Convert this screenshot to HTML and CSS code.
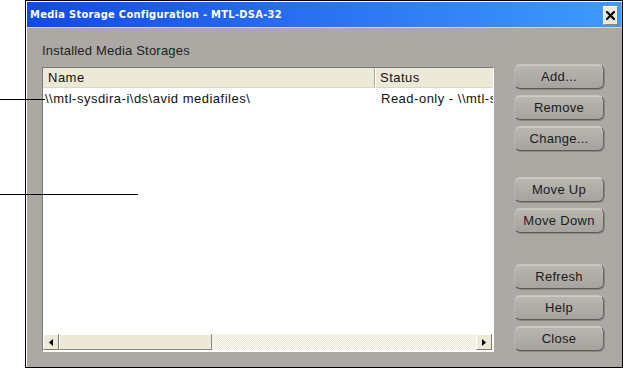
FILE: index.html
```html
<!DOCTYPE html>
<html lang="en">
<head>
    <meta charset="UTF-8">
    <title>Media Storage Configuration</title>
    <link rel="stylesheet" href="styles.css">
</head>
<body>

<div class="window">
    <div class="titlebar">
        <span class="title">Media Storage Configuration - MTL-DSA-32</span>
        <button class="close" type="button" aria-label="Close">
            <svg width="9" height="9" viewBox="0 0 9 9">
                <path d="M1 1 L8 8 M8 1 L1 8" stroke="#000" stroke-width="2.2" stroke-linecap="square"/>
            </svg>
        </button>
    </div>

    <div class="content">
        <div class="left">
            <div class="caption">Installed Media Storages</div>
            <div class="listbox">
                <div class="header">
                    <div class="col name">Name</div>
                    <div class="col status">Status</div>
                </div>
                <div class="rows">
                    <div class="row">
                        <div class="cell name">\\mtl-sysdira-i\ds\avid mediafiles\</div>
                        <div class="cell status">Read-only - \\mtl-sysdira-i\ds</div>
                    </div>
                </div>
                <div class="hscroll">
                    <div class="arrow">
                        <svg width="4" height="7" viewBox="0 0 4 7"><path d="M4 0 L0 3.5 L4 7 Z" fill="#000"/></svg>
                    </div>
                    <div class="thumb"></div>
                    <div class="track"></div>
                    <div class="arrow">
                        <svg width="4" height="7" viewBox="0 0 4 7"><path d="M0 0 L4 3.5 L0 7 Z" fill="#000"/></svg>
                    </div>
                </div>
            </div>
        </div>

        <div class="buttons">
            <div class="group">
                <button class="btn" type="button">Add...</button>
                <button class="btn" type="button">Remove</button>
                <button class="btn" type="button">Change...</button>
            </div>
            <div class="group move">
                <button class="btn" type="button">Move Up</button>
                <button class="btn" type="button">Move Down</button>
            </div>
            <div class="group tail">
                <button class="btn" type="button">Refresh</button>
                <button class="btn" type="button">Help</button>
                <button class="btn" type="button">Close</button>
            </div>
        </div>
    </div>
</div>

<!-- callout leader lines -->
<div class="leader first"></div>
<div class="leader second"></div>

</body>
</html>
```

FILE: styles.css
```css
body {
    margin: 0;
    width: 623px;
    height: 368px;
    background-color: #fff;
    font-family: 'Liberation Sans', Arial, sans-serif;
    position: relative;
    overflow: hidden;
}

.window {
    margin-left: 25px;
    width: 595px;
    height: 365px;
    border: 1px solid #000;
    background-color: #aca9a5;
    box-shadow: inset 1px 1px 0 #fff;
    padding: 1px 0 0 1px;
    box-sizing: content-box;
    display: flex;
    flex-direction: column;
}

.titlebar {
    height: 25px;
    margin-right: 1px;
    background: linear-gradient(to right, #1249e6, #2a72f2 50%, #3e9bff);
    border-bottom: 1px solid #d8d6d2;
    display: flex;
    align-items: center;
    justify-content: space-between;
    padding: 0 3px 0 3px;
}

.title {
    color: #fff;
    font-family: 'DejaVu Sans Condensed', 'DejaVu Sans', Verdana, sans-serif;
    font-weight: bold;
    font-size: 11px;
    letter-spacing: 0.3px;
}

.close {
    width: 15px;
    height: 19px;
    padding: 0;
    border: 1px solid #fff;
    border-color: #fff #8a887f #8a887f #fff;
    background-color: #ece9d8;
    display: flex;
    align-items: center;
    justify-content: center;
    margin-top: 1px;
}

.content {
    display: flex;
    gap: 20px;
    padding: 15px 0 0 15px;
}

.left {
    display: flex;
    flex-direction: column;
}

.caption {
    font-size: 13px;
    line-height: 15px;
    letter-spacing: 0.2px;
    color: #222;
    margin-bottom: 9px;
}

.listbox {
    width: 450px;
    height: 283px;
    border: 1px solid;
    border-color: #7d7a75 #fff #fff #7d7a75;
    background-color: #fff;
    display: flex;
    flex-direction: column;
    overflow: hidden;
}

.header {
    display: flex;
    height: 19px;
    background-color: #ece9d8;
    border-bottom: 1px solid #dcd8c6;
    flex-shrink: 0;
}

.col, .cell {
    font-size: 13px;
    color: #111;
    white-space: nowrap;
    overflow: hidden;
    flex-shrink: 0;
}

.col {
    line-height: 19px;
    padding-left: 5px;
    letter-spacing: 0.5px;
}

.col.name {
    width: 326px;
    border-right: 1px solid #aca899;
    box-shadow: 1px 0 0 #fff;
}

.col.status {
    width: 140px;
    padding-left: 5px;
}

.rows {
    flex: 1;
}

.row {
    display: flex;
    height: 17px;
    line-height: 17px;
    margin-top: 2px;
    letter-spacing: 0.5px;
}

.cell.name {
    width: 335px;
    padding-left: 2px;
}

.cell.status {
    width: 112px;
    padding-left: 1px;
}

.hscroll {
    display: flex;
    height: 16px;
    margin: 0 1px 1px 0;
    flex-shrink: 0;
}

.arrow {
    width: 14px;
    height: 14px;
    border: 1px solid;
    border-color: #fff #7a786f #7a786f #fff;
    background-color: #ece9d8;
    display: flex;
    align-items: center;
    justify-content: center;
}

.thumb {
    width: 151px;
    height: 14px;
    border: 1px solid;
    border-color: #fff #8a887f #8a887f #fff;
    background-color: #ece9d8;
}

.track {
    flex: 1;
    background-color: #f3f1e8;
    background-image: repeating-conic-gradient(#e9e6d8 0 25%, #fbfaf5 0 50%);
    background-size: 2px 2px;
}

.buttons {
    display: flex;
    flex-direction: column;
    padding-top: 21px;
}

.group {
    display: flex;
    flex-direction: column;
    gap: 7px;
}

.group.move {
    margin-top: 26px;
}

.group.tail {
    margin-top: 31px;
}

.btn {
    width: 90px;
    height: 25px;
    padding: 0;
    font-family: 'Liberation Sans', Arial, sans-serif;
    font-size: 13px;
    line-height: 15px;
    letter-spacing: 0.3px;
    color: #1a1a1a;
    border-radius: 6px;
    border: 1px solid;
    border-color: #c9c6c2 #6a6763 #5e5b57 #b8b5b1;
    background: linear-gradient(#bab7b3, #aeaba7 60%, #a6a39f);
    box-shadow: 1px 1px 0 #8a8783, inset 0 1px 0 #cfccc8;
}

.group .btn + .btn {
    margin-top: -1px;
}

.leader {
    position: absolute;
    left: 0;
    height: 1px;
    background-color: #000;
}

.leader.first {
    top: 99px;
    width: 45px;
}

.leader.second {
    top: 194px;
    width: 138px;
}
```
